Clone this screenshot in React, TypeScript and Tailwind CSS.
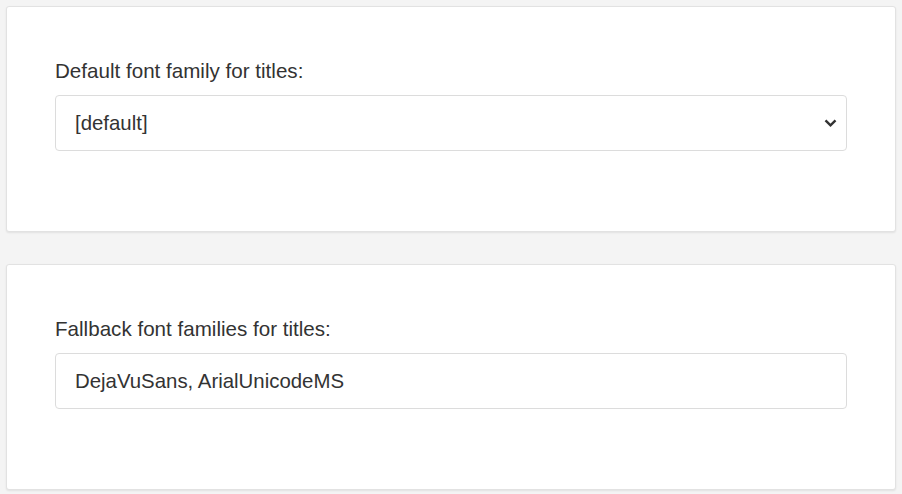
import { useState } from "react";

function Card({ children }: { children: React.ReactNode }) {
  return (
    <div className="rounded-[3px] border border-[#e2e2e2] bg-white px-[48px] pt-[49px] pb-[80px] shadow-[0_1px_2px_rgba(0,0,0,0.08)]">
      {children}
    </div>
  );
}

export default function App() {
  const [font, setFont] = useState("[default]");
  const [fallback, setFallback] = useState("DejaVuSans, ArialUnicodeMS");

  return (
    <div
      className="min-h-screen bg-[#f4f4f4] px-[6px] pt-[6px] text-[#333]"
      style={{ fontFamily: '"Liberation Sans", Arial, sans-serif' }}
    >
      <div className="flex w-[890px] flex-col gap-[32px]">
        <Card>
          <label className="mb-[9px] block text-[20.6px] leading-[30px]">
            Default font family for titles:
          </label>
          <div className="relative">
            <select
              value={font}
              onChange={(e) => setFont(e.target.value)}
              className="h-[56px] w-full appearance-none rounded-[4px] border border-[#dcdcdc] bg-white pl-[19px] text-[20.4px] text-[#333] outline-none"
            >
              <option>[default]</option>
              <option>DejaVuSans</option>
              <option>ArialUnicodeMS</option>
            </select>
            <svg
              className="pointer-events-none absolute right-[10px] top-1/2 -translate-y-1/2"
              width="13"
              height="9"
              viewBox="0 0 13 9"
              fill="none"
            >
              <path d="M1.5 1.8 6.5 6.8 11.5 1.8" stroke="#333" strokeWidth="2.4" />
            </svg>
          </div>
        </Card>

        <Card>
          <label className="mb-[9px] block text-[20.6px] leading-[30px]">
            Fallback font families for titles:
          </label>
          <input
            type="text"
            value={fallback}
            onChange={(e) => setFallback(e.target.value)}
            className="h-[56px] w-full rounded-[4px] border border-[#dcdcdc] bg-white pl-[19px] text-[20.4px] text-[#333] outline-none"
          />
        </Card>
      </div>
    </div>
  );
}
